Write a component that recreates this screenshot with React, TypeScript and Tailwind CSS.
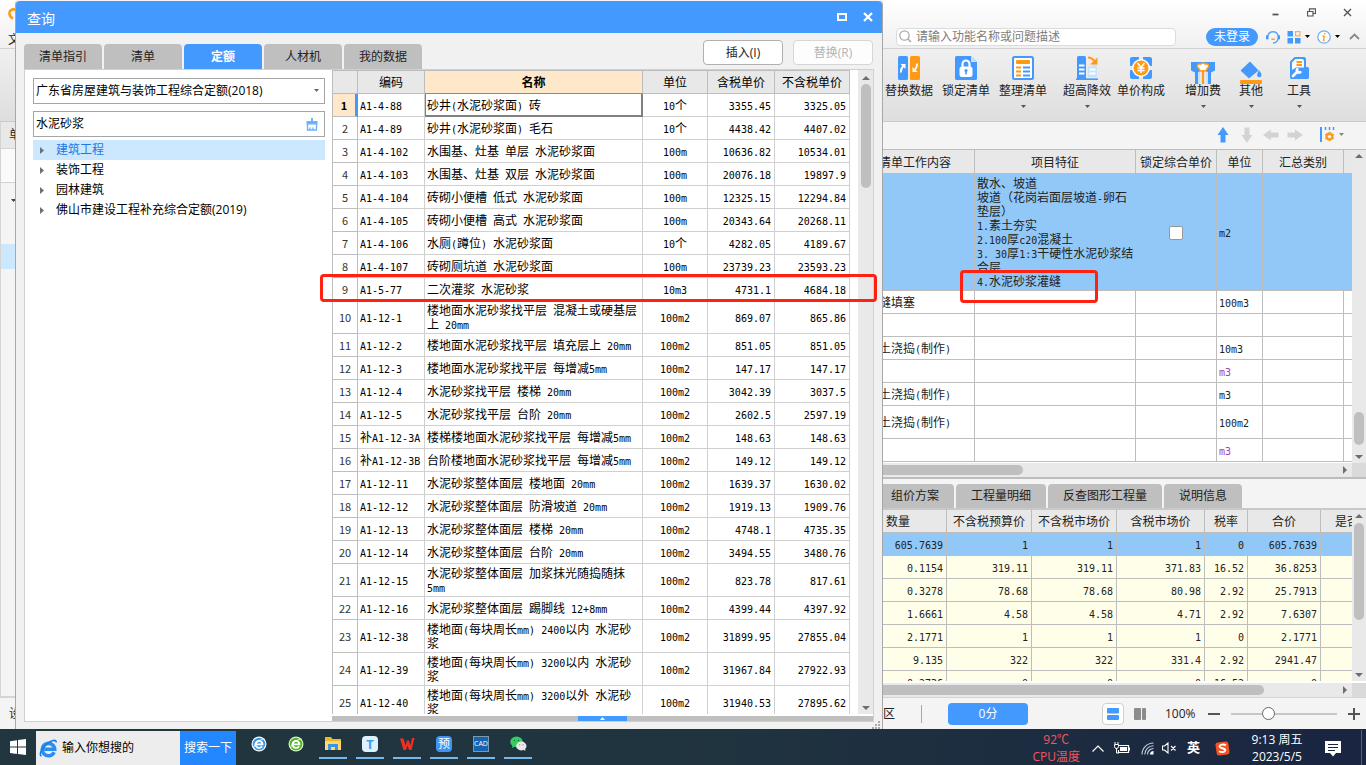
import React, { useState } from "react";

const UI = "font-['Open_Sans','Noto_Sans_CJK_SC',sans-serif]";
const GRID = "font-['Noto_Sans_CJK_SC',sans-serif]";

/* Grid text: Chinese at 12px, Latin and digits in a half-width face. */
function T({ children }: { children: string }) {
  const parts = children.split(/([\x20-\x7e]+)/).filter(Boolean);
  return (
    <>
      {parts.map((p, i) =>
        /^[\x20-\x7e]+$/.test(p) ? (
          <span key={i} className="font-['DejaVu_Sans_Mono',monospace] text-[10px] leading-none">
            {p}
          </span>
        ) : (
          p
        ),
      )}
    </>
  );
}

function Caret({ className = "" }: { className?: string }) {
  return (
    <svg className={className} width="5" height="3" viewBox="0 0 5 3" aria-hidden="true">
      <path d="M0 0h5L2.5 3z" fill="currentColor" />
    </svg>
  );
}

function ArrowUp() {
  return (
    <svg width="8" height="4" viewBox="0 0 8 4" aria-hidden="true">
      <path d="M0 4h8L4 0z" fill="#6d6d78" />
    </svg>
  );
}
function ArrowDown() {
  return (
    <svg width="8" height="4" viewBox="0 0 8 4" aria-hidden="true">
      <path d="M0 0h8L4 4z" fill="#6d6d78" />
    </svg>
  );
}
function ArrowRight() {
  return (
    <svg width="4" height="8" viewBox="0 0 4 8" aria-hidden="true">
      <path d="M0 0v8l4-4z" fill="#6d6d78" />
    </svg>
  );
}

/* ---------- dialog data ---------- */

type Row = [string, string, string, string, string];
const rows: Row[] = [
  ["A1-4-88", "砂井(水泥砂浆面) 砖", "10个", "3355.45", "3325.05"],
  ["A1-4-89", "砂井(水泥砂浆面) 毛石", "10个", "4438.42", "4407.02"],
  ["A1-4-102", "水围基、灶基 单层 水泥砂浆面", "100m", "10636.82", "10534.01"],
  ["A1-4-103", "水围基、灶基 双层 水泥砂浆面", "100m", "20076.18", "19897.9"],
  ["A1-4-104", "砖砌小便槽 低式 水泥砂浆面", "100m", "12325.15", "12294.84"],
  ["A1-4-105", "砖砌小便槽 高式 水泥砂浆面", "100m", "20343.64", "20268.11"],
  ["A1-4-106", "水厕(蹲位) 水泥砂浆面", "10个", "4282.05", "4189.67"],
  ["A1-4-107", "砖砌厕坑道 水泥砂浆面", "100m", "23739.23", "23593.23"],
  ["A1-5-77", "二次灌浆 水泥砂浆", "10m3", "4731.1", "4684.18"],
  ["A1-12-1", "楼地面水泥砂浆找平层 混凝土或硬基层上 20mm", "100m2", "869.07", "865.86"],
  ["A1-12-2", "楼地面水泥砂浆找平层 填充层上 20mm", "100m2", "851.05", "851.05"],
  ["A1-12-3", "楼地面水泥砂浆找平层 每增减5mm", "100m2", "147.17", "147.17"],
  ["A1-12-4", "水泥砂浆找平层 楼梯 20mm", "100m2", "3042.39", "3037.5"],
  ["A1-12-5", "水泥砂浆找平层 台阶 20mm", "100m2", "2602.5", "2597.19"],
  ["补A1-12-3A", "楼梯楼地面水泥砂浆找平层 每增减5mm", "100m2", "148.63", "148.63"],
  ["补A1-12-3B", "台阶楼地面水泥砂浆找平层 每增减5mm", "100m2", "149.12", "149.12"],
  ["A1-12-11", "水泥砂浆整体面层 楼地面 20mm", "100m2", "1639.37", "1630.02"],
  ["A1-12-12", "水泥砂浆整体面层 防滑坡道 20mm", "100m2", "1919.13", "1909.76"],
  ["A1-12-13", "水泥砂浆整体面层 楼梯 20mm", "100m2", "4748.1", "4735.35"],
  ["A1-12-14", "水泥砂浆整体面层 台阶 20mm", "100m2", "3494.55", "3480.76"],
  ["A1-12-15", "水泥砂浆整体面层 加浆抹光随捣随抹 5mm", "100m2", "823.78", "817.61"],
  ["A1-12-16", "水泥砂浆整体面层 踢脚线 12+8mm", "100m2", "4399.44", "4397.92"],
  ["A1-12-38", "楼地面(每块周长mm) 2400以内 水泥砂浆", "100m2", "31899.95", "27855.04"],
  ["A1-12-39", "楼地面(每块周长mm) 3200以内 水泥砂浆", "100m2", "31967.84", "27922.93"],
  ["A1-12-40", "楼地面(每块周长mm) 3200以外 水泥砂浆", "100m2", "31940.53", "27895.62"],
];
const tallRows = [9, 20, 22, 23, 24];

function QuotaTable() {
  const head = "border-b border-r border-[#bdbdbd] bg-[#e8e8e8] p-0 font-normal";
  const cell = "border-b border-r border-[#d0d0d0] p-0 align-middle";
  return (
    <table className={`${GRID} w-[518px] table-fixed border-separate border-spacing-0 border-l border-t border-[#bdbdbd] text-[12px] leading-[14px] text-black`}>
      <colgroup>
        <col className="w-[25px]" />
        <col className="w-[67px]" />
        <col className="w-[218px]" />
        <col className="w-[65px]" />
        <col className="w-[67px]" />
        <col className="w-[75px]" />
      </colgroup>
      <thead>
        <tr className="h-[23px]">
          <th className={head}></th>
          <th className={head}>编码</th>
          <th className="border-b border-r border-b-[#4499ff] border-r-[#bdbdbd] bg-[#ffe7c9] p-0 font-bold">名称</th>
          <th className={head}>单位</th>
          <th className={head}>含税单价</th>
          <th className={head}>不含税单价</th>
        </tr>
      </thead>
      <tbody>
        {rows.map((r, i) => (
          <tr key={r[0]} className={tallRows.includes(i) ? "h-[33px]" : "h-[23px]"}>
            <th
              scope="row"
              className={
                i === 0
                  ? "border-b border-r-3 border-b-[#bdbdbd] border-r-[#4499ff] bg-[#ffe7c9] p-0 align-middle text-[11px] font-bold"
                  : "border-b border-r border-[#bdbdbd] p-0 align-middle text-[11px] font-normal text-[#333]"
              }
            >
              {i + 1}
            </th>
            <td className={`${cell} whitespace-nowrap pl-[2px]`}>
              <T>{r[0]}</T>
            </td>
            <td
              className={
                i === 0
                  ? "border-b-2 border-l border-r-2 border-[#808080] p-0 pl-px align-middle"
                  : `${cell} pl-[2px] pr-1`
              }
            >
              <T>{r[1]}</T>
            </td>
            <td className={`${cell} text-center`}>
              <T>{r[2]}</T>
            </td>
            <td className={`${cell} pr-[3px] text-right`}>
              <T>{r[3]}</T>
            </td>
            <td className={`${cell} pr-[3px] text-right`}>
              <T>{r[4]}</T>
            </td>
          </tr>
        ))}
      </tbody>
    </table>
  );
}

const dialogTabs = ["清单指引", "清单", "定额", "人材机", "我的数据"];
const tree = ["建筑工程", "装饰工程", "园林建筑", "佛山市建设工程补充综合定额(2019)"];

function QueryDialog() {
  const [tab, setTab] = useState("定额");
  const [query, setQuery] = useState("水泥砂浆");
  return (
    <section
      aria-label="查询"
      className={`${UI} relative mt-px flex w-[868px] shrink-0 flex-col rounded-t border-x border-[#a8a8a8] bg-[#f1f1f1] text-[12px]`}
    >
      <header className="flex h-8 items-center rounded-t bg-[#4499ff] pl-[11px] pr-[9px] pt-1 text-white">
        <h1 className="flex-1 text-[14px] leading-5">查询</h1>
        <button aria-label="最大化" className="mr-4 pb-1">
          <svg width="10" height="8" viewBox="0 0 10 8">
            <rect x="1" y="1" width="8" height="6" fill="none" stroke="#fff" strokeWidth="2" />
          </svg>
        </button>
        <button aria-label="关闭" className="pb-1">
          <svg width="10" height="10" viewBox="0 0 10 10">
            <path d="M1 1l8 8M9 1L1 9" stroke="#fff" strokeWidth="2.2" />
          </svg>
        </button>
      </header>

      <div className="flex h-9 shrink-0 items-end pl-2 pr-[9px]">
        <div role="tablist" className="flex flex-1 gap-[2px]">
          {dialogTabs.map((t) => (
            <button
              key={t}
              role="tab"
              aria-selected={t === tab}
              onClick={() => setTab(t)}
              className={
                t === tab
                  ? "h-[25px] w-[78px] rounded-t-sm bg-[#4499ff] font-bold text-white"
                  : "h-[25px] w-[78px] rounded-t-sm bg-[#bfbfbf] text-[#222]"
              }
            >
              {t}
            </button>
          ))}
        </div>
        <div className="flex gap-[10px] pb-1">
          <button className="h-[25px] w-20 rounded-sm border border-[#b0b0b0] bg-white text-[#222]">插入(I)</button>
          <button disabled className="h-[25px] w-20 rounded-sm border border-[#d6d6d6] bg-[#fdfdfd] text-[#b4b4b4]">
            替换(R)
          </button>
        </div>
      </div>

      <div className="mx-2 mb-[7px] flex min-h-0 flex-1 border border-[#d0d0d0] bg-white">
        <div className="w-[307px] shrink-0 px-2 pt-2">
          <div className="relative h-[26px] w-[292px]">
            <select
              aria-label="定额库"
              className="h-full w-full appearance-none border border-[#a5a5a5] bg-white pl-[2px] text-black"
            >
              <option>广东省房屋建筑与装饰工程综合定额(2018)</option>
            </select>
            <Caret className="pointer-events-none absolute right-[6px] top-[11px] text-[#666]" />
          </div>
          <div className="mt-[7px] flex h-[26px] w-[292px] items-center border border-[#a5a5a5] pr-[6px]">
            <input
              aria-label="搜索定额"
              value={query}
              onChange={(e) => setQuery(e.target.value)}
              className="min-w-0 flex-1 pl-[2px] text-black outline-none"
            />
            <button aria-label="清空" onClick={() => setQuery("")}>
              <svg width="12" height="13" viewBox="0 0 12 13">
                <path d="M5 0h2v3h4.500v3.500H.5V3H5z" fill="#6fb0fb" />
                <path d="M1.500 6v6h9V6M4 9.500v2.500M7 9.500v2.500" fill="none" stroke="#6fb0fb" strokeWidth="1.300" />
              </svg>
            </button>
          </div>
          <ul className="mt-[3px] w-[292px]">
            {tree.map((n, i) => (
              <li key={n}>
                <button
                  className={
                    i === 0
                      ? "flex h-5 w-full items-center bg-[#cce8ff] pl-[7px] text-[#2277e0]"
                      : "flex h-5 w-full items-center pl-[7px] text-black"
                  }
                >
                  <svg width="4" height="7" viewBox="0 0 4 7" aria-hidden="true">
                    <path d="M0 0v7l4-3.500z" fill="#707070" />
                  </svg>
                  <span className="ml-3">{n}</span>
                </button>
              </li>
            ))}
          </ul>
        </div>

        <div className="flex min-w-0 flex-1 flex-col">
          <div className="flex min-h-0 flex-1 overflow-hidden">
            <div className="flex-1 overflow-hidden">
              <QuotaTable />
            </div>
            <div className="flex w-[15px] flex-col items-center bg-[#e9e9e9] pb-1 pt-[6px]">
              <ArrowUp />
              <div className="mt-1 h-[104px] w-[10px] rounded-full bg-[#bfbfbf]" />
              <div className="flex-1" />
              <ArrowDown />
            </div>
          </div>
          <div className="mt-[2px] flex h-[5px] justify-center bg-[#bfbfbf]">
            <button aria-label="展开" className="flex w-[49px] items-center justify-center bg-[#4499ff]">
              <svg width="5" height="3" viewBox="0 0 5 3">
                <path d="M0 3h5L2.500 0z" fill="#fff" />
              </svg>
            </button>
          </div>
        </div>
      </div>
      <svg className="absolute bottom-0 right-[2px]" width="8" height="8" viewBox="0 0 8 8" aria-hidden="true">
        <path d="M6 0h2v2H6zM3 3h2v2H3zM6 3h2v2H6zM0 6h2v2H0zM3 6h2v2H3zM6 6h2v2H6z" fill="#aaa" />
      </svg>
      {/* highlight around row 9 */}
      <div className="pointer-events-none absolute left-[304px] top-[273px] h-[28px] w-[557px] rounded-sm border-3 border-[#ff2213]" />
    </section>
  );
}

/* ---------- ribbon ---------- */

function RibbonIcon({ name }: { name: string }) {
  const b = "#4499ff";
  const o = "#ff9a17";
  return (
    <svg className="overflow-visible" width="24" height="24" viewBox="0 0 24 24" aria-hidden="true">
      {name === "swap" && (
        <>
          <rect x="1" width="10" height="24" rx="1.500" fill={b} />
          <rect x="13" width="10" height="24" rx="1.500" fill={o} />
          <path d="M3.800 16.500c0-3 .6-4.500 2.400-6.500" fill="none" stroke="#fff" strokeWidth="1.900" />
          <path d="M3.500 8h5v5z" fill="#fff" />
          <path d="M20.200 7.500c0 3-.6 4.500-2.400 6.500" fill="none" stroke="#fff" strokeWidth="1.900" />
          <path d="M20.500 16h-5v-5z" fill="#fff" />
        </>
      )}
      {name === "lock" && (
        <>
          <path d="M2.500 0H17l6 6v16.500a1.500 1.500 0 0 1-1.500 1.500h-19A1.500 1.500 0 0 1 1 22.500v-21A1.500 1.500 0 0 1 2.500 0z" fill={b} />
          <path d="M17 0l6 6h-6z" fill="#c5e1ff" />
          <path d="M8.500 11V8a3.500 3.500 0 0 1 7 0v3" fill="none" stroke="#fff" strokeWidth="2.200" />
          <rect x="5.500" y="10.500" width="13" height="10.500" rx="2.500" fill="#fff" />
          <circle cx="12" cy="14.500" r="1.600" fill={b} />
          <path d="M11.200 15h1.600v3.500h-1.600z" fill={b} />
        </>
      )}
      {name === "list" && (
        <>
          <rect x="2" y="1" width="20" height="22" rx="1.500" fill="#fff" stroke={b} strokeWidth="2" />
          <rect x="5" y="4" width="14" height="4" rx="1" fill={o} />
          <path d="M5 11.500h5M5 15.500h5M5 19.500h5" stroke={o} strokeWidth="1.800" />
          <path d="M12 11.500h7M12 15.500h7M12 19.500h7" stroke={b} strokeWidth="1.800" />
        </>
      )}
      {name === "tower" && (
        <>
          <path d="M2 1.500A1.500 1.500 0 0 1 3.500 0H9.500A1.500 1.500 0 0 1 11 1.500V23H2z" fill={b} />
          <path d="M4 9.500h5.500M4 13.500h5.500M4 17.500h5.500" stroke="#fff" strokeWidth="1.800" />
          <path d="M13 10.500h4l1-2h4V21.500h-9z" fill="#c9e3ff" />
          <path d="M14.500 13.500h6M14.500 17.500h6" stroke="#fff" strokeWidth="1.800" />
          <path d="M1 23.200h22" stroke={b} strokeWidth="1.600" />
          <path d="M13 1.500c3 0 5 1.500 6.500 4" fill="none" stroke={o} strokeWidth="2.200" />
          <path d="M22.500 1.500v7h-7.500z" fill={o} />
        </>
      )}
      {name === "price" && (
        <>
          <path d="M3 1h7v9H1V3a2 2 0 0 1 2-2zM14 1h7a2 2 0 0 1 2 2v7h-9zM1 14h9v9H3a2 2 0 0 1-2-2zM14 14h9v7a2 2 0 0 1-2 2h-7z" fill={b} />
          <circle cx="12" cy="12" r="9" fill="#fff" />
          <circle cx="12" cy="12" r="7.500" fill={o} />
          <path d="M8.500 7l3.500 4.500L15.500 7M12 11.500V17M8.500 12h7M8.500 14.500h7" fill="none" stroke="#fff" strokeWidth="1.500" />
        </>
      )}
      {name === "bridge" && (
        <g transform="translate(0 5)">
          <path d="M0 1h24v9l-4 2v12h-3V12l-3-2H10l-3 2v12H4V12l-4-2z" fill={b} transform="scale(1 .96)" />
          <path d="M8 11v12M16 11v12" stroke="#bfe0ff" strokeWidth="1.500" />
          <path d="M8 3h2a2.500 2.500 0 0 1 4 0h2a2 2 0 0 1 1 3.500L14.500 10h-5L7 6.500A2 2 0 0 1 8 3z" fill="#fff" stroke={o} strokeWidth="1.500" />
          <path d="M12 9v14" stroke={o} strokeWidth="2.200" />
        </g>
      )}
      {name === "paint" && (
        <g transform="translate(0 5)">
          <path d="M11 1.500l7.500 8L10 16.500 2.500 9.500z" fill={b} stroke={b} strokeWidth="1.500" strokeLinejoin="round" />
          <path d="M20 9c2 3 2.500 4 2.500 5a2.200 2.200 0 0 1-4.400 0c0-1 .6-2.400 1.900-5z" fill={b} />
          <rect x="1" y="19" width="22" height="4" rx="1" fill={o} />
        </g>
      )}
      {name === "tools" && (
        <>
          <path d="M3 5.500L7.500 1H17a2 2 0 0 1 2 2v8h1.500a1.500 1.500 0 0 1 1.500 1.500v9a1.500 1.500 0 0 1-1.500 1.500H4.500A1.500 1.500 0 0 1 3 21.500z" fill={b} />
          <path d="M5 6.500L8.500 3h6.500a2 2 0 0 1 2 2v6.500H9L5 14z" fill="#fff" />
          <path d="M9.500 6h5.500M9.500 9h5.500" stroke={o} strokeWidth="2" />
          <path d="M6 20l4-4" stroke="#fff" strokeWidth="2.600" strokeLinecap="round" />
          <path d="M9.500 12l2 .2v2.800h2.800l.5 1.500a3.300 3.300 0 1 1-5.300-4.500z" fill="#fff" />
        </>
      )}
    </svg>
  );
}

function RibbonButton({ icon, label, menu }: { icon: string; label: string; menu?: boolean }) {
  return (
    <button className="flex flex-col items-center whitespace-nowrap text-[#222]">
      <RibbonIcon name={icon} />
      <span className="mt-[2px] leading-[18px]">{label}</span>
      {menu && <Caret className="mt-[5px] text-[#555]" />}
    </button>
  );
}

function BlockArrow({ turn, color }: { turn: string; color: string }) {
  return (
    <button aria-label="移动" className={color}>
      <svg className={turn} width="14" height="16" viewBox="0 0 14 16">
        <path d="M7 0l5.500 8H9.500v7.500h-5V8H1.500z" fill="currentColor" />
      </svg>
    </button>
  );
}

/* ---------- right-hand grids ---------- */

const itemRows: { a: string; unit: string; tall?: boolean; violet?: boolean }[] = [
  { a: "缝填塞", unit: "100m3" },
  { a: "", unit: "" },
  { a: "土浇捣(制作)", unit: "10m3" },
  { a: "", unit: "m3", violet: true },
  { a: "土浇捣(制作)", unit: "m3" },
  { a: "土浇捣(制作)", unit: "100m2", tall: true },
  { a: "", unit: "m3", violet: true },
];

function ItemTable() {
  const c = "border-b border-r border-[#bdbdbd] p-0 align-middle";
  const h = `${c} h-6 whitespace-nowrap font-normal`;
  return (
    <table className={`${GRID} w-full table-fixed border-separate border-spacing-0 text-[12px] leading-[14px] text-[#222]`}>
      <colgroup>
        <col className="w-[92px]" />
        <col className="w-[161px]" />
        <col className="w-[81px]" />
        <col className="w-[46px]" />
        <col className="w-[81px]" />
        <col />
      </colgroup>
      <thead className="bg-[#e8e8e8]">
        <tr>
          <th className={`${h} overflow-hidden text-left`}>
            <span className="-ml-1">清单工作内容</span>
          </th>
          <th className={h}>项目特征</th>
          <th className={h}>锁定综合单价</th>
          <th className={h}>单位</th>
          <th className={h}>汇总类别</th>
          <th className="border-b border-[#bdbdbd] p-0"></th>
        </tr>
      </thead>
      <tbody>
        <tr className="h-[117px] bg-[#92c8f7]">
          <td className={c}></td>
          <td className={`${c} pl-[2px]`}>
            {["散水、坡道", "坡道（花岗岩面层坡道-卵石", "垫层）", "1.素土夯实", "2.100厚c20混凝土", "3. 30厚1:3干硬性水泥砂浆结", "合层", "4.水泥砂浆灌缝"].map(
              (l) => (
                <div key={l} className="h-[14px] whitespace-nowrap">
                  <T>{l}</T>
                </div>
              ),
            )}
          </td>
          <td className={`${c} text-center`}>
            <input
              type="checkbox"
              aria-label="锁定综合单价"
              className="size-[14px] appearance-none rounded-xs border border-[#999] bg-white align-middle"
            />
          </td>
          <td className={`${c} pl-[2px]`}>
            <T>m2</T>
          </td>
          <td className={c}></td>
          <td className="border-b border-[#bdbdbd] p-0"></td>
        </tr>
        {itemRows.map((r, i) => (
          <tr key={i} className={r.tall ? "h-[33px] bg-white" : "h-[23px] bg-white"}>
            <td className={`${c} overflow-hidden whitespace-nowrap`}>
              <span className="-ml-1">
                <T>{r.a}</T>
              </span>
            </td>
            <td className={c}></td>
            <td className={c}></td>
            <td className={r.violet ? `${c} pl-[2px] text-[#a040b0]` : `${c} pl-[2px]`}>
              <T>{r.unit}</T>
            </td>
            <td className={c}></td>
            <td className="border-b border-[#bdbdbd] p-0"></td>
          </tr>
        ))}
      </tbody>
    </table>
  );
}

const priceRows = [
  ["605.7639", "1", "1", "1", "0", "605.7639"],
  ["0.1154", "319.11", "319.11", "371.83", "16.52", "36.8253"],
  ["0.3278", "78.68", "78.68", "80.98", "2.92", "25.7913"],
  ["1.6661", "4.58", "4.58", "4.71", "2.92", "7.6307"],
  ["2.1771", "1", "1", "1", "0", "2.1771"],
  ["9.135", "322", "322", "331.4", "2.92", "2941.47"],
  ["0.2736", "0", "0", "0", "16.52", "0"],
];

function PriceTable() {
  const c = "border-b border-r border-[#bdbdbd] p-0 align-middle";
  const h = `${c} h-[23px] whitespace-nowrap font-normal`;
  return (
    <table className={`${GRID} w-full table-fixed border-separate border-spacing-0 text-[12px] leading-[14px] text-[#222]`}>
      <colgroup>
        <col className="w-[64px]" />
        <col className="w-[85px]" />
        <col className="w-[85px]" />
        <col className="w-[88px]" />
        <col className="w-[43px]" />
        <col className="w-[73px]" />
        <col />
      </colgroup>
      <thead className="bg-[#e8e8e8]">
        <tr>
          <th className={`${h} pl-[3px] text-left`}>数量</th>
          <th className={h}>不含税预算价</th>
          <th className={h}>不含税市场价</th>
          <th className={h}>含税市场价</th>
          <th className={h}>税率</th>
          <th className={h}>合价</th>
          <th className="overflow-hidden whitespace-nowrap border-b border-[#bdbdbd] p-0 pl-[14px] text-left font-normal">是否</th>
        </tr>
      </thead>
      <tbody>
        {priceRows.map((r, i) => (
          <tr key={i} className={i === 0 ? "h-[23px] bg-[#92c8f7]" : "h-[23px] bg-[#ffffe9]"}>
            {r.map((v, j) => (
              <td key={j} className={`${c} pr-[3px] text-right`}>
                <T>{v}</T>
              </td>
            ))}
            <td className="border-b border-[#bdbdbd] p-0"></td>
          </tr>
        ))}
      </tbody>
    </table>
  );
}

function MainPane() {
  const [zoom, setZoom] = useState(33);
  return (
    <main className={`${UI} relative flex min-w-0 flex-1 flex-col bg-[#f4f4f4] text-[12px]`}>
      <div className="flex h-[49px] shrink-0 flex-col border-b border-[#d2d2d2] bg-linear-to-b from-white to-[#f0f0f0]">
        <div className="flex h-6 items-center justify-end gap-[27px] pr-[14px] text-[#555]">
          <button aria-label="最小化">
            <svg width="9" height="9" viewBox="0 0 9 9">
              <path d="M1.500 6.500h6" stroke="currentColor" strokeWidth="1.800" />
            </svg>
          </button>
          <button aria-label="还原">
            <svg width="9" height="9" viewBox="0 0 9 9">
              <path d="M.5 3.500h5.500v4.500H.5zM2.500 3V.800H8.500v4.700H6.500" fill="none" stroke="currentColor" strokeWidth="1.200" />
            </svg>
          </button>
          <button aria-label="关闭">
            <svg width="9" height="9" viewBox="0 0 9 9">
              <path d="M1 1l7 7M8 1L1 8" stroke="currentColor" strokeWidth="1.400" />
            </svg>
          </button>
        </div>
        <div className="flex h-6 items-center pb-[1px] pl-[13px] pr-[6px] pt-[2px]">
          <label className="flex h-[18px] max-w-[280px] flex-1 items-center rounded-sm border border-[#dcdcdc] bg-white pl-[2px]">
            <svg width="13" height="13" viewBox="0 0 13 13" aria-hidden="true">
              <circle cx="5.500" cy="5.500" r="4.700" fill="none" stroke="#a9a9a9" strokeWidth="1.200" />
              <path d="M9 9l3 3" stroke="#a9a9a9" strokeWidth="1.600" />
            </svg>
            <input
              aria-label="搜索功能"
              placeholder="请输入功能名称或问题描述"
              className="ml-1 min-w-0 flex-1 bg-transparent leading-4 outline-none placeholder:text-[#7d7d7d]"
            />
          </label>
          <button className="ml-auto h-[18px] w-[52px] rounded-full bg-[#4499ff] leading-[18px] text-white">未登录</button>
          <svg className="ml-2" width="14" height="14" viewBox="0 0 14 14" aria-hidden="true">
            <path d="M2 5.500a5.200 5.200 0 0 1 10 0M12 8.500a5.200 5.200 0 0 1-5 4.500" fill="none" stroke="#5aa5fa" strokeWidth="1.500" />
            <rect y="5" width="2.500" height="4.500" rx="1.200" fill="#4499ff" />
            <rect x="11.500" y="5" width="2.500" height="4.500" rx="1.200" fill="#4499ff" />
            <path d="M5 8.500h4a2 1.500 0 0 1-4 0z" fill="#ff9a17" />
          </svg>
          <svg className="ml-[7px]" width="14" height="14" viewBox="0 0 14 14" aria-hidden="true">
            <path d="M.5 1h5.500v5.500H.5zM.5 8H6v5.500H.5zM8 8h5.500v5.500H8z" fill="#4499ff" />
            <rect x="8.600" y="1.600" width="4.300" height="4.300" fill="none" stroke="#ffad48" strokeWidth="1.200" />
          </svg>
          <Caret className="ml-1 text-black" />
          <svg className="ml-[7px]" width="14" height="14" viewBox="0 0 14 14" aria-hidden="true">
            <circle cx="7" cy="7" r="6.200" fill="#fff" stroke="#6db0fb" strokeWidth="1.300" />
            <path d="M8 3l-.300 1.300M7.300 6L6.500 10.500M5.500 6h1.800M5.800 10.500h1.700" stroke="#ff9a17" strokeWidth="1.400" />
          </svg>
          <Caret className="ml-1 text-black" />
          <svg className="ml-[9px]" width="11" height="7" viewBox="0 0 11 7" aria-hidden="true">
            <path d="M1 6l4.500-4.500L10 6" fill="none" stroke="#888" strokeWidth="1.800" />
          </svg>
        </div>
      </div>

      <nav className="flex h-[73px] shrink-0 items-start border-b border-[#c9c9c9] bg-linear-to-b from-[#f0f0f0] to-[#dedede] pl-[2px] pt-[7px]">
        <div className="flex gap-[9px]">
          <RibbonButton icon="swap" label="替换数据" />
          <RibbonButton icon="lock" label="锁定清单" />
          <RibbonButton icon="list" label="整理清单" menu />
        </div>
        <div className="ml-4 flex gap-[6px]">
          <RibbonButton icon="tower" label="超高降效" menu />
          <RibbonButton icon="price" label="单价构成" />
        </div>
        <div className="ml-5 flex gap-[18px]">
          <RibbonButton icon="bridge" label="增加费" menu />
          <RibbonButton icon="paint" label="其他" menu />
        </div>
        <div className="ml-6">
          <RibbonButton icon="tools" label="工具" menu />
        </div>
      </nav>

      <div className="flex h-[27px] shrink-0 items-center justify-end gap-[10px] pb-[2px] pr-[22px]">
        <BlockArrow turn="" color="text-[#4499ff]" />
        <BlockArrow turn="rotate-180" color="text-[#d3d3d3]" />
        <BlockArrow turn="-rotate-90" color="text-[#d3d3d3]" />
        <BlockArrow turn="rotate-90" color="text-[#d3d3d3]" />
        <button aria-label="设置" className="ml-2 flex items-center gap-1 text-[#888]">
          <svg width="15" height="15" viewBox="0 0 15 15">
            <path d="M1 0v15" stroke="#4499ff" strokeWidth="2" />
            <path d="M5.500 0v3M9.500 0v3M13.500 0v3" stroke="#4499ff" strokeWidth="1.500" />
            <circle cx="9.500" cy="9.500" r="3" fill="none" stroke="#ff9a17" strokeWidth="2.200" />
            <path d="M9.500 4.800v9.400M5.400 7.200l8.200 4.600M13.600 7.200l-8.200 4.600" stroke="#ff9a17" strokeWidth="1.800" />
            <circle cx="9.500" cy="9.500" r="1.600" fill="#fff" />
          </svg>
          <Caret />
        </button>
      </div>

      <div className="flex h-[314px] shrink-0 border-t border-[#bdbdbd] bg-white">
        <div className="min-w-0 flex-1 overflow-hidden">
          <ItemTable />
        </div>
        <div className="flex w-[14px] shrink-0 flex-col items-center bg-[#e9e9e9] pb-1 pt-1">
          <ArrowUp />
          <div className="flex-1" />
          <div className="mb-[10px] h-[33px] w-[10px] rounded-full bg-[#bfbfbf]" />
          <ArrowDown />
        </div>
      </div>
      <div className="flex h-4 shrink-0 items-center border-b-2 border-[#bdbdbd] bg-[#e9e9e9]">
        <div className="h-[10px] w-[140px] rounded-r-full bg-[#bfbfbf]" />
        <div className="flex-1" />
        <ArrowRight />
        <div className="ml-[5px] h-full w-[14px] bg-[#dadada]" />
      </div>

      <div role="tablist" className="flex h-[29px] shrink-0 items-end gap-[2px] text-[#222]">
        <button role="tab" className="h-6 w-[71px] rounded-tr-sm bg-[#bfbfbf] pr-[7px]">组价方案</button>
        <button role="tab" className="h-6 w-[90px] rounded-t-sm bg-[#bfbfbf]">工程量明细</button>
        <button role="tab" className="h-6 w-[114px] rounded-t-sm bg-[#bfbfbf]">反查图形工程量</button>
        <button role="tab" className="h-6 w-[78px] rounded-t-sm bg-[#bfbfbf]">说明信息</button>
      </div>
      <div className="flex min-h-0 flex-1 border-b-2 border-t-2 border-b-white border-t-[#c8c8c8]">
        <div className="min-w-0 flex-1 overflow-hidden">
          <PriceTable />
        </div>
        <div className="flex w-[14px] shrink-0 flex-col items-center bg-[#e9e9e9] pb-1 pt-1">
          <ArrowUp />
          <div className="mt-[5px] h-[97px] w-[10px] rounded-full bg-[#bfbfbf]" />
          <div className="flex-1" />
          <ArrowDown />
        </div>
      </div>
      <div className="flex h-[15px] shrink-0 items-center border-b border-[#d4d4d4] bg-[#e9e9e9]">
        <div className="h-[10px] w-[381px] rounded-r-full bg-[#bfbfbf]" />
        <div className="flex-1" />
        <ArrowRight />
        <div className="ml-[5px] h-full w-[14px] bg-[#dadada]" />
      </div>

      <footer className="flex h-[31px] shrink-0 items-center pr-[6px] text-[#222]">
        <span>区</span>
        <div className="ml-[26px] h-[18px] w-px bg-[#a0aab4]" />
        <button className="ml-[26px] h-[22px] w-20 rounded-sm bg-[#4499ff] text-white">0分</button>
        <button aria-label="上下布局" className="ml-auto flex size-[22px] items-center justify-center rounded-sm border border-[#d0d0d0] bg-white">
          <svg width="12" height="12" viewBox="0 0 12 12">
            <rect width="12" height="5.500" rx="1" fill="#4499ff" />
            <rect y="7" width="12" height="5" rx="1" fill="#4499ff" />
          </svg>
        </button>
        <button aria-label="左右布局" className="ml-[10px]">
          <svg width="12" height="12" viewBox="0 0 12 12">
            <rect width="7" height="12" rx="1" fill="#8c8c8c" />
            <rect x="8" width="4" height="12" rx="1" fill="#8c8c8c" />
          </svg>
        </button>
        <span className="ml-[19px] w-8">100%</span>
        <button aria-label="缩小" className="ml-[11px]">
          <svg width="12" height="12" viewBox="0 0 12 12">
            <path d="M0 6h12" stroke="#555" strokeWidth="2" />
          </svg>
        </button>
        <input
          type="range"
          aria-label="缩放"
          value={zoom}
          onChange={(e) => setZoom(Number(e.target.value))}
          className="ml-[11px] h-[2px] w-[106px] appearance-none bg-[#c6c6c6] [&::-webkit-slider-thumb]:size-[13px] [&::-webkit-slider-thumb]:appearance-none [&::-webkit-slider-thumb]:rounded-full [&::-webkit-slider-thumb]:border [&::-webkit-slider-thumb]:border-solid [&::-webkit-slider-thumb]:border-[#666] [&::-webkit-slider-thumb]:bg-white"
        />
        <button aria-label="放大" className="ml-[11px]">
          <svg width="12" height="12" viewBox="0 0 12 12">
            <path d="M0 6h12M6 0v12" stroke="#555" strokeWidth="2" />
          </svg>
        </button>
      </footer>
      {/* highlight around item 4 of the feature text */}
      <div className="pointer-events-none absolute left-[77px] top-[270px] h-[33px] w-[138px] rounded-sm border-3 border-[#ff2213]" />
    </main>
  );
}

function LeftStrip() {
  return (
    <aside className={`${UI} flex w-[15px] shrink-0 flex-col overflow-hidden bg-[#f4f4f4] text-[12px] text-[#222]`}>
      <div className="h-[49px] shrink-0 border-b border-[#d2d2d2] bg-linear-to-b from-white to-[#f0f0f0] pl-2 pt-2">
        <svg width="12" height="12" viewBox="0 0 12 12" aria-hidden="true">
          <path d="M8 2C4 0 1 3 1.500 6c.3 2 1.500 3.500 3.500 4.500" fill="none" stroke="#ff9a17" strokeWidth="2.600" />
        </svg>
        <div className="mt-3 h-4 leading-4">文</div>
      </div>
      <div className="h-[73px] shrink-0 border-b border-[#c9c9c9] bg-linear-to-b from-[#f0f0f0] to-[#dedede]" />
      <div className="flex flex-1 flex-col border-b-2 border-l border-[#d4d4d4]">
        <div className="flex h-[27px] items-center border-b border-[#d4d4d4] bg-[#e8e8e8] pl-2">单</div>
        <div className="h-[34px] border-b border-[#d4d4d4] bg-[#fafafa]" />
        <Caret className="ml-[10px] mt-4 shrink-0 text-[#444]" />
        <div className="mt-[42px] h-[25px] bg-[#cce8ff]" />
      </div>
      <div className="flex h-[31px] items-center pl-[9px]">设</div>
    </aside>
  );
}

/* ---------- taskbar ---------- */

function EdgeLogo({ size, a, b }: { size: number; a: string; b: string }) {
  return (
    <svg width={size} height={size} viewBox="0 0 16 16" aria-hidden="true">
      <path
        d="M12.700 11.200A5.200 5.200 0 1 1 13.200 8.600H4.500"
        fill="none"
        stroke={a}
        strokeWidth="3"
      />
      <path d="M2 14.500C-.500 13 3 6 9 2.500c3-1.700 5.500-2 5.500.5" fill="none" stroke={b} strokeWidth="1.300" />
    </svg>
  );
}

function DiscLogo({ ring, fill }: { ring: string; fill: string }) {
  return (
    <svg width="16" height="16" viewBox="0 0 16 16" aria-hidden="true">
      <circle cx="8" cy="8" r="7.500" fill={ring} />
      <circle cx="8" cy="8" r="6.300" fill={fill} />
      <path d="M11 10.200A3.500 3.500 0 1 1 11.500 8.300H5.500" fill="none" stroke="#fff" strokeWidth="1.800" />
      <path d="M2.500 12.500C3 8 8 3.500 13.500 3" fill="none" stroke="#fff" strokeWidth=".8" />
    </svg>
  );
}

function TaskItem({ label, active, children }: { label: string; active?: boolean; children: React.ReactNode }) {
  return (
    <button
      aria-label={label}
      className={
        active
          ? "flex h-[30px] w-7 justify-center border-b-2 border-[#76b9ed] pt-[7px]"
          : "flex h-[30px] w-7 justify-center pt-[7px]"
      }
    >
      {children}
    </button>
  );
}

function Taskbar() {
  return (
    <footer className={`${UI} flex h-9 shrink-0 items-start bg-linear-to-r from-[#22363f] via-[#20343f] to-[#1a2541] text-[12px] text-white`}>
      <button aria-label="开始" className="flex h-9 w-9 items-center justify-center">
        <svg width="16" height="16" viewBox="0 0 16 16">
          <path d="M0 2.200L7 1.200V7.600H0zM8 1.100L16 0V7.600H8zM0 8.500h7v6.400L0 13.900zM8 8.500h8V16L8 14.900z" fill="#fff" />
        </svg>
      </button>
      <div className="mt-[2px] flex h-[34px] items-center bg-[#ededed] pl-[3px]">
        <EdgeLogo size={19} a="#2b8ef0" b="#1b7fe8" />
        <input aria-label="搜索" defaultValue="输入你想搜的" className="ml-1 w-[118px] text-black outline-none" />
      </div>
      <button className="mt-[2px] h-[34px] w-14 bg-[#2388ff]">搜索一下</button>
      <div className="ml-[9px] flex gap-[9px]">
        <TaskItem label="浏览器">
          <DiscLogo ring="#fff" fill="#3d9ae8" />
        </TaskItem>
        <TaskItem label="安全浏览器">
          <DiscLogo ring="#d9f5c0" fill="#52b52a" />
        </TaskItem>
        <TaskItem label="文件资源管理器" active>
          <svg width="16" height="15" viewBox="0 0 16 15">
            <path d="M0 1h6l1.500 2H16v11H0z" fill="#f0b429" />
            <path d="M0 5h16v9H0z" fill="#ffd970" />
            <path d="M3 8h10v6h-3v-3H6v3H3z" fill="#3b95e0" />
          </svg>
        </TaskItem>
        <TaskItem label="文档" active>
          <span className="flex size-4 items-center justify-center rounded-sm bg-[#dff1ff] text-[13px] font-bold leading-4 text-[#3aa0ee]">T</span>
        </TaskItem>
        <TaskItem label="WPS" active>
          <svg width="16" height="16" viewBox="0 0 16 16">
            <path d="M1 2.500h3.500l2 7L8 4.500h2l1.500 5 1.500-7.500h2.500L12.500 14H10L8.500 9.500 7 14H4.500z" fill="#f0301c" />
          </svg>
        </TaskItem>
        <TaskItem label="预算" active>
          <span className="flex size-4 items-center justify-center rounded-sm bg-[#3f93f5] leading-4">预</span>
        </TaskItem>
        <TaskItem label="CAD" active>
          <span className="flex size-4 items-center justify-center border border-[#7d97ab] bg-[#1763b0] text-[7px] leading-4">CAD</span>
        </TaskItem>
        <TaskItem label="微信" active>
          <svg width="17" height="16" viewBox="0 0 17 16">
            <ellipse cx="6.500" cy="5.800" rx="6.200" ry="5.300" fill="#35cc62" />
            <path d="M2.500 9l-.5 3 3-1.500z" fill="#35cc62" />
            <ellipse cx="11.300" cy="10" rx="5.200" ry="4.400" fill="#e9e9e9" />
            <path d="M13 13.500l2.500 1.500-.5-2.800z" fill="#e9e9e9" />
            <path d="M4.500 4.500h.01M8.500 4.500h.01" stroke="#186a30" strokeWidth="1.400" strokeLinecap="round" />
            <path d="M9.700 8.800h.01M13 8.800h.01" stroke="#777" strokeWidth="1.200" strokeLinecap="round" />
          </svg>
        </TaskItem>
      </div>
      <div className="ml-auto flex h-9 items-center pt-[2px]">
        <div className="text-center leading-[17px] text-[#f2555f]">
          <div>92℃</div>
          <div>CPU温度</div>
        </div>
        <svg className="ml-3" width="12" height="7" viewBox="0 0 12 7" aria-hidden="true">
          <path d="M.5 6.500L6 1l5.500 5.500" fill="none" stroke="#fff" strokeWidth="1.200" />
        </svg>
        <svg className="ml-[10px]" width="16" height="12" viewBox="0 0 16 12" aria-hidden="true">
          <path d="M5 3.500h9.500v7H4.500V8" fill="none" stroke="#fff" strokeWidth="1.200" />
          <path d="M6 5h7v4H6zM15 5.500h1v3h-1z" fill="#fff" />
          <path d="M1 0v2M4 0v2M.5 2.500h4v2a2 2 0 0 1-4 0zM2.500 6v5H5" fill="none" stroke="#fff" strokeWidth="1" />
        </svg>
        <svg className="ml-[11px]" width="13" height="13" viewBox="0 0 13 13" aria-hidden="true">
          <path d="M1 12.500A11.500 11.500 0 0 1 12.500 1M3.800 12.500A8.700 8.700 0 0 1 12.500 3.800M6.500 12.500a6 6 0 0 1 6-6" fill="none" stroke="#c5ccd4" strokeWidth="1.100" />
          <path d="M9 12.500a3.500 3.500 0 0 1 3.500-3.500v3.500z" fill="#fff" />
        </svg>
        <svg className="ml-2" width="15" height="12" viewBox="0 0 15 12" aria-hidden="true">
          <path d="M.5 4h2L6 1v10L2.500 8h-2zM9 4l4.500 4.500M13.500 4L9 8.500" fill="none" stroke="#fff" strokeWidth="1.100" />
        </svg>
        <span className="ml-[10px] text-[13px] font-bold">英</span>
        <svg className="ml-[15px]" width="15" height="15" viewBox="0 0 15 15" aria-hidden="true">
          <rect x="1" y="1" width="13" height="13" rx="2.500" fill="#f4511e" transform="rotate(-8 7.500 7.500)" />
          <path d="M11 4.200C8.500 3 5 3.500 4.500 5.300 4 7.500 10.500 7 10.300 9.300 10 11.300 6 11.500 4 10.300" fill="none" stroke="#fff" strokeWidth="1.900" />
        </svg>
        <div className="ml-5 w-[54px] whitespace-nowrap text-center leading-[17px]">
          <div>9:13 周五</div>
          <div>2023/5/5</div>
        </div>
        <svg className="ml-[21px] mr-[20px]" width="16" height="17" viewBox="0 0 16 17" aria-hidden="true">
          <path d="M0 1h16v12h-5l-3 3.500L5 13H0z" fill="#fff" />
          <path d="M3 4.500h10M3 7.500h10M3 10.500h7" stroke="#1a2541" strokeWidth="1.100" />
        </svg>
        <div className="mr-1 h-9 w-px bg-[#56607a]" />
      </div>
    </footer>
  );
}

export default function App() {
  return (
    <div className="flex h-screen flex-col overflow-hidden bg-[#f4f4f4]">
      <div className="flex min-h-0 flex-1">
        <LeftStrip />
        <QueryDialog />
        <MainPane />
      </div>
      <Taskbar />
    </div>
  );
}
